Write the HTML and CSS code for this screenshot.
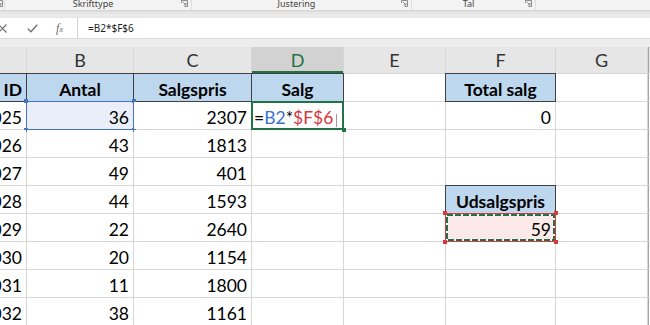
FILE: index.html
```html
<!DOCTYPE html>
<html>
<head>
<meta charset="utf-8">
<link rel="stylesheet" href="styles.css">
</head>
<body>
<div class="ribbon">
  <div class="rgroup g0"><span class="launch"><svg width="7" height="7" viewBox="0 0 7 7"><path d="M0.5 3V0.5H6.5V6.5H3.5M1.8 1.8L5 5M5 2.8V5H2.8" fill="none" stroke="#8c8c8c" stroke-width="1"/></svg></span></div>
  <div class="rgroup g1"><span class="rlabel">Skrifttype</span><span class="launch"><svg width="7" height="7" viewBox="0 0 7 7"><path d="M0.5 3V0.5H6.5V6.5H3.5M1.8 1.8L5 5M5 2.8V5H2.8" fill="none" stroke="#8c8c8c" stroke-width="1"/></svg></span></div>
  <div class="rgroup g2"><span class="rlabel">Justering</span><span class="launch"><svg width="7" height="7" viewBox="0 0 7 7"><path d="M0.5 3V0.5H6.5V6.5H3.5M1.8 1.8L5 5M5 2.8V5H2.8" fill="none" stroke="#8c8c8c" stroke-width="1"/></svg></span></div>
  <div class="rgroup g3"><span class="rlabel">Tal</span><span class="launch"><svg width="7" height="7" viewBox="0 0 7 7"><path d="M0.5 3V0.5H6.5V6.5H3.5M1.8 1.8L5 5M5 2.8V5H2.8" fill="none" stroke="#8c8c8c" stroke-width="1"/></svg></span></div>
</div>
<div class="rshadow"></div>
<div class="fbar">
  <div class="fbtns">
    <svg class="ico-x" width="9" height="9" viewBox="0 0 9 9"><path d="M0.5 0.5L8.5 8.5M8.5 0.5L0.5 8.5" stroke="#6d6d6d" stroke-width="1.1" fill="none"/></svg>
    <svg class="ico-ok" width="11" height="9" viewBox="0 0 11 9"><path d="M0.7 4.6L3.9 7.8L10.3 0.8" stroke="#6d6d6d" stroke-width="1.3" fill="none"/></svg>
    <span class="fx">f<span class="fxx">x</span></span>
  </div>
  <div class="finput">=B2*$F$6</div>
</div>
<div class="fgap"></div>
<div class="sheet">
  <div class="ch"></div><div class="ch">B</div><div class="ch">C</div><div class="ch csel">D</div><div class="ch">E</div><div class="ch">F</div><div class="ch">G</div><div class="ch cend"></div>

  <div class="c hd clipr">Ordre ID</div><div class="c hd">Antal</div><div class="c hd">Salgspris</div><div class="c hd">Salg</div><div class="c"></div><div class="c hd">Total salg</div><div class="c"></div><div class="c cend"></div>

  <div class="c num clipr">1025</div><div class="c num refb">36<i class="k tl"></i><i class="k tr"></i><i class="k bl"></i><i class="k br"></i></div><div class="c num">2307</div><div class="c active"><span class="eq">=</span><span class="rb">B2</span><span class="eq">*</span><span class="rr">$F$6</span><span class="caret"></span><i class="fh"></i></div><div class="c"></div><div class="c num">0</div><div class="c"></div><div class="c cend"></div>

  <div class="c num clipr">1026</div><div class="c num">43</div><div class="c num">1813</div><div class="c"></div><div class="c"></div><div class="c"></div><div class="c"></div><div class="c cend"></div>

  <div class="c num clipr">1027</div><div class="c num">49</div><div class="c num">401</div><div class="c"></div><div class="c"></div><div class="c"></div><div class="c"></div><div class="c cend"></div>

  <div class="c num clipr">1028</div><div class="c num">44</div><div class="c num">1593</div><div class="c"></div><div class="c"></div><div class="c hd">Udsalgspris</div><div class="c"></div><div class="c cend"></div>

  <div class="c num clipr">1029</div><div class="c num">22</div><div class="c num">2640</div><div class="c"></div><div class="c"></div><div class="c num refr"><svg class="ants" width="109" height="27" viewBox="0 0 109 27"><rect x="1" y="1" width="107" height="25" fill="none" stroke="#ffffff" stroke-width="2"/><rect x="1" y="1" width="107" height="25" fill="none" stroke="#217346" stroke-width="2" stroke-dasharray="6 2"/></svg><span class="val">59</span><i class="k kr tl"></i><i class="k kr tr"></i><i class="k kr bl"></i><i class="k kr br"></i></div><div class="c"></div><div class="c cend"></div>

  <div class="c num clipr">1030</div><div class="c num">20</div><div class="c num">1154</div><div class="c"></div><div class="c"></div><div class="c"></div><div class="c"></div><div class="c cend"></div>

  <div class="c num clipr">1031</div><div class="c num">11</div><div class="c num">1800</div><div class="c"></div><div class="c"></div><div class="c"></div><div class="c"></div><div class="c cend"></div>

  <div class="c num clipr">1032</div><div class="c num">38</div><div class="c num">1161</div><div class="c"></div><div class="c"></div><div class="c"></div><div class="c"></div><div class="c cend"></div>
</div>
</body>
</html>
```

FILE: styles.css
```css
html, body {
  margin: 0;
  padding: 0;
}
body {
  width: 650px;
  height: 325px;
  overflow: hidden;
  background: #ffffff;
  font-family: Lato, "Liberation Sans", sans-serif;
}

/* ribbon bottom strip */
.ribbon {
  display: flex;
  height: 10px;
  background: #f3f3f3;
  overflow: hidden;
  font-family: "Noto Sans", "Open Sans", sans-serif;
  font-size: 9px;
  line-height: 10px;
  color: #444444;
}
.rgroup {
  display: flex;
  align-items: flex-start;
  border-right: 1px solid #dedede;
  box-sizing: border-box;
}
.g0 { width: 5px; }
.g1 { width: 187px; }
.g2 { width: 220px; }
.g3 { width: 124px; }
.rlabel {
  flex: 1;
  text-align: center;
  white-space: nowrap;
  margin-top: -1px;
}
.launch {
  display: block;
  width: 7px;
  height: 7px;
  margin-right: 3px;
}
.g0 .launch { margin-left: -4px; }
.launch svg { display: block; }

.rshadow {
  height: 8px;
  background: linear-gradient(#d2d2d2, #e4e4e4 25%, #ececec 70%, #e6e6e6);
}

/* formula bar */
.fbar {
  display: flex;
  height: 20px;
  background: #ffffff;
}
.fbtns {
  width: 77px;
  border-right: 1px solid #d0d0d0;
  display: flex;
  align-items: center;
}
.ico-x { margin-left: -2px; }
.ico-ok { margin-left: 20px; }
.fx {
  margin-left: 18px;
  font-family: "Liberation Serif", serif;
  font-style: italic;
  font-size: 12px;
  color: #6d6d6d;
  line-height: 12px;
}
.fxx { font-size: 9px; }
.finput {
  flex: 1;
  padding-left: 10px;
  font-family: "Noto Sans", "Open Sans", sans-serif;
  font-size: 10px;
  line-height: 20px;
  color: #222222;
}
.fgap {
  height: 9px;
  background: #ededed;
  border-top: 1px solid #dadada;
  box-sizing: border-box;
}

/* sheet */
.sheet {
  display: grid;
  grid-template-columns: 26px 106px 117px 91px 101px 109px 91px 1fr;
  grid-template-rows: 26px repeat(9, 27px);
  gap: 1px;
  background: #d6d6d6;
  width: 650px;
}
.ch {
  background: #e6e6e6;
  font-size: 18px;
  line-height: 26px;
  text-align: center;
  color: #333333;
}
.csel {
  background: #d2d2d2;
  color: #217346;
  box-shadow: inset 0 -2px 0 #217346;
}
.cend {
  box-shadow: inset 1px 0 0 #a6a6a6;
}
.c {
  position: relative;
  background: #ffffff;
  display: flex;
  align-items: flex-end;
  padding: 0 4px 1px;
  font-size: 17.5px;
  line-height: 20px;
  color: #000000;
  white-space: nowrap;
  min-width: 0;
}
.num { justify-content: flex-end; }
.clipr {
  justify-content: flex-end;
  overflow: hidden;
}
.hd {
  background: #bdd7ee;
  font-weight: 700;
  justify-content: center;
  outline: 1px solid #404040;
}
.hd.clipr {
  justify-content: flex-end;
  padding-right: 4px;
}

/* B2 reference highlight */
.refb {
  background: #e9eef8;
  outline: 1px solid #4472c4;
}
.k {
  position: absolute;
  width: 4px;
  height: 4px;
  background: #4472c4;
}
.kr { background: #d9383d; }
.tl { left: -3px; top: -3px; }
.tr { right: -3px; top: -3px; }
.bl { left: -3px; bottom: -3px; }
.br { right: -3px; bottom: -3px; }

/* active cell D2 */
.active {
  outline: 2px solid #217346;
  outline-offset: -1px;
  padding-left: 2px;
  z-index: 1;
}
.eq { color: #000000; }
.rb { color: #3b6fcf; }
.rr { color: #d9383d; }
.caret {
  width: 1px;
  height: 13px;
  background: #9a9a9a;
  margin-left: 3px;
  margin-bottom: 1px;
}
.fh {
  position: absolute;
  right: -3px;
  bottom: -3px;
  width: 4px;
  height: 4px;
  background: #217346;
}

/* F6 reference highlight with marquee */
.refr {
  background: #fbeae9;
  outline: 1px solid #d9383d;
  z-index: 1;
}
.ants {
  position: absolute;
  left: 0;
  top: 0;
}
.val { position: relative; }
```
